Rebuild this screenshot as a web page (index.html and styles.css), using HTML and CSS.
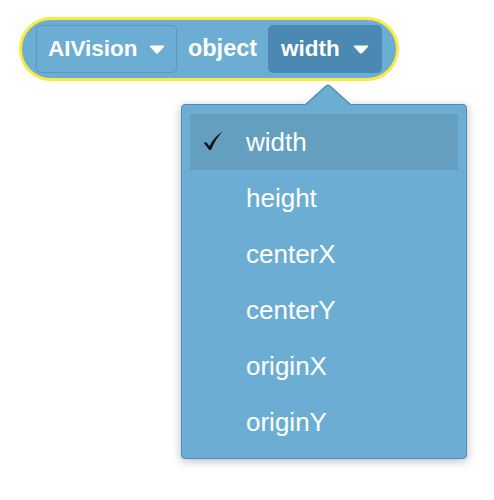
FILE: index.html
```html
<!DOCTYPE html>
<html>
<head>
<meta charset="utf-8">
<link rel="stylesheet" href="styles.css">
</head>
<body>
<div class="stage">
  <div class="block">
    <div class="field field-source">
      <span class="label">AIVision</span>
      <svg class="caret" width="16" height="9" viewBox="0 0 16 9"><path d="M1.5 1.2 H14.5 L8.8 7.6 Q8 8.4 7.2 7.6 Z" fill="#fff" stroke="#fff" stroke-width="1.4" stroke-linejoin="round"/></svg>
    </div>
    <span class="text">object</span>
    <div class="field field-active">
      <span class="label">width</span>
      <svg class="caret" width="16" height="9" viewBox="0 0 16 9"><path d="M1.5 1.2 H14.5 L8.8 7.6 Q8 8.4 7.2 7.6 Z" fill="#fff" stroke="#fff" stroke-width="1.4" stroke-linejoin="round"/></svg>
    </div>
  </div>

  <div class="menu">
    <svg class="pointer" width="48" height="22" viewBox="0 0 48 22"><path d="M1 21 L22 2 Q24 0.3 26 2 L47 21" fill="#6caed3" stroke="#4f8db8" stroke-width="1.2"/></svg>
    <div class="item selected">
      <svg class="check" width="22" height="20" viewBox="0 0 22 20"><path d="M1.8 12 Q3.6 10.4 5.2 12.2 L7.4 15.2 Q12 6.2 20.6 0.6 Q13.6 8 9.2 18.4 Q8.1 19.9 7 18.6 Z" fill="#111"/></svg>
      <span>width</span>
    </div>
    <div class="item"><span>height</span></div>
    <div class="item"><span>centerX</span></div>
    <div class="item"><span>centerY</span></div>
    <div class="item"><span>originX</span></div>
    <div class="item"><span>originY</span></div>
  </div>
</div>
</body>
</html>
```

FILE: styles.css
```css
html, body {
  margin: 0;
  padding: 0;
  background: #ffffff;
}

.stage {
  position: relative;
  width: 494px;
  height: 500px;
  padding: 17px 0 0 19px;
  box-sizing: border-box;
  font-family: "Liberation Sans", Arial, sans-serif;
}

.block {
  display: inline-flex;
  align-items: center;
  justify-content: space-between;
  box-sizing: border-box;
  width: 380px;
  height: 64px;
  padding: 0 14px;
  border: 3px solid #fbea3f;
  border-radius: 32px;
  background: #6caed3;
}

.field {
  display: flex;
  align-items: center;
  justify-content: space-between;
  box-sizing: border-box;
  height: 48px;
  border: 1px solid #5b97c0;
  border-radius: 5px;
  background: #6caed3;
}

.field-source {
  width: 141px;
  padding: 0 11px 0 11px;
}

.field-active {
  width: 114px;
  padding: 0 12px 0 12px;
  background: #4a89b4;
  border-color: #4a89b4;
}

.label, .text {
  color: #ffffff;
  font-weight: bold;
  font-size: 22.5px;
  line-height: 1;
}

.text {
  font-size: 23.5px;
}

.caret {
  display: block;
  margin-top: 1px;
}

.menu {
  position: absolute;
  left: 181px;
  top: 104px;
  width: 286px;
  height: 355px;
  box-sizing: border-box;
  padding: 9px 8px;
  background: #6caed3;
  border: 1px solid #4f8db8;
  border-radius: 4px;
  box-shadow: 0 2px 10px rgba(0, 0, 0, 0.28);
}

.pointer {
  position: absolute;
  left: 122px;
  top: -21px;
}

.item {
  position: relative;
  display: flex;
  align-items: center;
  height: 56px;
  padding-left: 56px;
  color: #ffffff;
  font-size: 26px;
}

.item.selected {
  background: #649fbf;
}

.check {
  position: absolute;
  left: 12px;
  top: 17px;
}
```
